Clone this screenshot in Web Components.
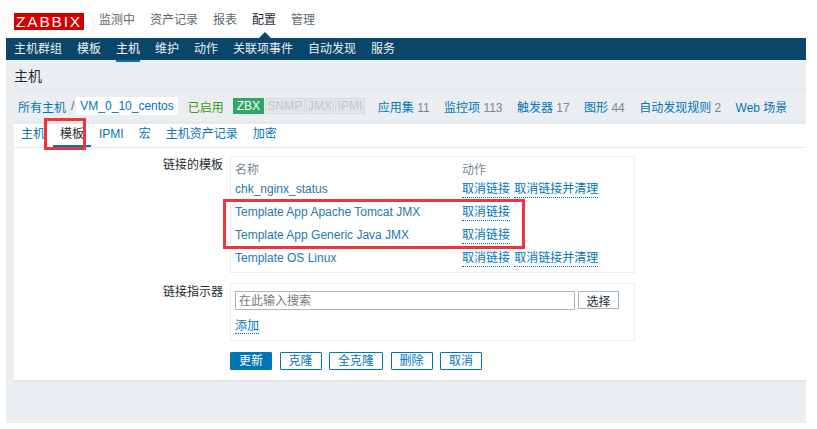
<!DOCTYPE html>
<html>
<head>
<meta charset="utf-8">
<style>
  html, body { margin: 0; padding: 0; background: #fff; }
  body { font: 12px "Liberation Sans", Arial, "Noto Sans CJK SC", sans-serif; color: #1f2c33; }
</style>
</head>
<body>
<zbx-app></zbx-app>
<script>
const FONT = '"Liberation Sans", Arial, "Noto Sans CJK SC", sans-serif';

class ZbxTopNav extends HTMLElement {
  constructor() {
    super();
    this.attachShadow({ mode: 'open' });
    this.shadowRoot.innerHTML = `
      <style>
        :host { display: block; font: 12px ${FONT}; }
        .top { display: flex; align-items: center; height: 38px; padding-left: 14px; position: relative; box-sizing: border-box; }
        .logo { background: #d40000; color: #fff; font-size: 15.5px; line-height: 18px; height: 17px; width: 70px; text-align: center; letter-spacing: 1.8px; margin-right: 15px; margin-top: 5px; overflow: hidden; }
        .top a { color: #5c6a72; margin-right: 15px; margin-top: -1px; }
        .top a.on { color: #1f2c33; }
        .arrow { position: absolute; left: 259px; bottom: 0; width: 0; height: 0; border: 6px solid transparent; border-top: 0; border-bottom-color: #0a466a; }
        .sub { display: flex; height: 22px; background: #0a466a; margin: 0 11px 0 6px; padding-left: 8px; gap: 15px; }
        .sub a { color: #fff; opacity: .92; line-height: 23px; height: 24px; box-sizing: border-box; }
        .sub a.on { border-bottom: 2px solid #0275b8; opacity: 1; }
      </style>
      <div class="top">
        <div class="logo">ZABBIX</div>
        <a>监测中</a><a>资产记录</a><a>报表</a><a class="on">配置</a><a>管理</a>
        <span class="arrow"></span>
      </div>
      <div class="sub">
        <a>主机群组</a><a>模板</a><a class="on">主机</a><a>维护</a><a>动作</a><a>关联项事件</a><a>自动发现</a><a>服务</a>
      </div>`;
  }
}

class ZbxHostHeader extends HTMLElement {
  constructor() {
    super();
    this.attachShadow({ mode: 'open' });
    this.shadowRoot.innerHTML = `
      <style>
        :host { display: block; font: 12px ${FONT}; }
        h1 { margin: 0; font: 14px/33px ${FONT}; height: 29px; color: #1f2c33; border-bottom: 1px solid #dfe4e7; }
        .crumbs { display: flex; align-items: center; height: 32px; border-bottom: 1px solid #dfe4e7; padding-left: 4px; white-space: nowrap; box-sizing: content-box; }
        a { color: #0275b8; }
        .sep { color: #5c6a72; margin: 0 2px 0 5px; }
        .host { background: #fff; padding: 0 4px; height: 18px; line-height: 18px; margin-right: 10px; }
        .ok { color: #3a9c1e; margin-right: 9px; }
        .tags { display: flex; margin-right: 12px; }
        .tag { height: 16px; line-height: 15px; padding: 0 1.4px; margin-right: 1px; box-sizing: border-box; color: #bfc6ca; background: #e2e6e8; border: 1px solid #d5dadd; font-size: 12px; }
        .tag.zbx { background: #2fa866; color: #fff; border-color: #2fa866; padding: 0 3px; }
        .item { margin-right: 14.4px; }
        .n { color: #7a868d; }
      </style>
      <h1>主机</h1>
      <div class="crumbs">
        <a>所有主机</a><span class="sep">/</span><a class="host">VM_0_10_centos</a>
        <span class="ok">已启用</span>
        <span class="tags"><span class="tag zbx">ZBX</span><span class="tag">SNMP</span><span class="tag">JMX</span><span class="tag">IPMI</span></span>
        <span class="item"><a>应用集</a> <span class="n">11</span></span>
        <span class="item"><a>监控项</a> <span class="n">113</span></span>
        <span class="item"><a>触发器</a> <span class="n">17</span></span>
        <span class="item"><a>图形</a> <span class="n">44</span></span>
        <span class="item"><a>自动发现规则</a> <span class="n">2</span></span>
        <span class="item"><a>Web 场景</a></span>
      </div>`;
  }
}

class ZbxTabs extends HTMLElement {
  constructor() {
    super();
    this.attachShadow({ mode: 'open' });
    this.shadowRoot.innerHTML = `
      <style>
        :host { display: flex; height: 23px; border-bottom: 1px solid #e8eaec; padding-left: 7px; font: 12px ${FONT}; }
        a { color: #0275b8; line-height: 21px; height: 23px; padding: 0 0; margin-right: 15px; box-sizing: border-box; }
        a.on { color: #1f2c33; border-bottom: 2px solid #0275b8; padding: 0 7px; margin: 0 8px 0 -7px; }
      </style>
      <a>主机</a><a class="on">模板</a><a>IPMI</a><a>宏</a><a>主机资产记录</a><a>加密</a>`;
  }
}

class ZbxFormRow extends HTMLElement {
  constructor() {
    super();
    this.attachShadow({ mode: 'open' });
    this.shadowRoot.innerHTML = `
      <style>
        :host { display: grid; grid-template-columns: 209px auto; column-gap: 7px; font: 12px ${FONT}; }
        .label { text-align: right; color: #1f2c33; padding-top: 2px; line-height: 14px; }
      </style>
      <div class="label"><slot name="label"></slot></div>
      <div><slot></slot></div>`;
  }
}

class ZbxTemplateList extends HTMLElement {
  constructor() {
    super();
    this.attachShadow({ mode: 'open' });
    const rows = [
      ['chk_nginx_status', true],
      ['Template App Apache Tomcat JMX', false],
      ['Template App Generic Java JMX', false],
      ['Template OS Linux', true]
    ];
    const rowHtml = rows.map(([name, clear]) => `
      <div class="row">
        <a class="name">${name}</a>
        <span><a class="act">取消链接</a>${clear ? ' <a class="act wide">取消链接并清理</a>' : ''}</span>
      </div>`).join('');
    this.shadowRoot.innerHTML = `
      <style>
        :host { display: block; width: 405px; height: 117px; box-sizing: border-box; border: 1px solid #ebeef0; padding: 4px 4px 3px; font: 12px ${FONT}; }
        .row { display: grid; grid-template-columns: 227px auto; height: 23px; line-height: 23px; white-space: nowrap; }
        .row.head { height: 17px; line-height: 18px; color: #7a868d; }
        a { color: #2a76ad; }
        .act { color: #0275b8; border-bottom: 1px dotted #0275b8; padding-bottom: 1px; }
        .wide { margin-left: 1px; }
      </style>
      <div class="row head"><span>名称</span><span>动作</span></div>
      ${rowHtml}`;
  }
}

class ZbxLinkIndicators extends HTMLElement {
  constructor() {
    super();
    this.attachShadow({ mode: 'open' });
    this.shadowRoot.innerHTML = `
      <style>
        :host { display: block; width: 405px; height: 58px; box-sizing: border-box; border: 1px solid #ebeef0; padding: 7px 4px; font: 12px ${FONT}; }
        .line { display: flex; gap: 3px; }
        input { width: 340px; height: 19px; box-sizing: border-box; border: 1px solid #a8b6bd; padding: 0 3px; font: 12px ${FONT}; margin: 0; outline: 0; background: #fff; }
        input::placeholder { color: #7a7a7a; opacity: 1; }
        button { width: 41px; height: 18px; box-sizing: border-box; border: 1px solid #a8b6bd; background: #fff; color: #1f2c33; font: 12px ${FONT}; padding: 0; }
        a { display: inline-block; margin-top: 9px; color: #0275b8; border-bottom: 1px dotted #0275b8; line-height: 14px; }
      </style>
      <div class="line"><input placeholder="在此输入搜索"><button>选择</button></div>
      <a>添加</a>`;
  }
}

class ZbxButton extends HTMLElement {
  constructor() {
    super();
    this.attachShadow({ mode: 'open' });
    this.shadowRoot.innerHTML = `
      <style>
        :host { display: inline-block; height: 18px; box-sizing: border-box; border: 1px solid #0275b8; border-radius: 1px; background: #fff; color: #0275b8; font: 12px/16px ${FONT}; padding: 0 8px; }
        :host([primary]) { background: #0275b8; color: #fff; }
      </style>
      <slot></slot>`;
  }
}

class ZbxApp extends HTMLElement {
  constructor() {
    super();
    this.attachShadow({ mode: 'open' });
    this.shadowRoot.innerHTML = `
      <style>
        :host { display: block; font: 12px ${FONT}; }
        .wrap { background: #ebeef0; margin: 0 11px 6px 6px; height: 363px; padding-left: 8px; box-sizing: border-box; }
        .panel { background: #fff; border-bottom: 2px solid #e0e4e7; margin-top: 1px; height: 258px; box-sizing: border-box; }
        .form { padding-top: 8px; display: flex; flex-direction: column; }
        .gap { height: 10px; }
        .buttons { display: flex; gap: 7.5px; margin: 11px 0 0 216px; }
        .red { position: absolute; border: 3px solid #f0343c; box-sizing: border-box; pointer-events: none; }
        .page { position: relative; height: 429px; overflow: hidden; }
      </style>
      <div class="page">
        <zbx-top-nav></zbx-top-nav>
        <div class="wrap">
          <zbx-host-header></zbx-host-header>
          <div class="panel">
            <zbx-tabs></zbx-tabs>
            <div class="form">
              <zbx-form-row><span slot="label">链接的模板</span><zbx-template-list></zbx-template-list></zbx-form-row>
              <div class="gap"></div>
              <zbx-form-row><span slot="label">链接指示器</span><zbx-link-indicators></zbx-link-indicators></zbx-form-row>
              <div class="buttons">
                <zbx-button primary>更新</zbx-button><zbx-button>克隆</zbx-button><zbx-button>全克隆</zbx-button><zbx-button>删除</zbx-button><zbx-button>取消</zbx-button>
              </div>
            </div>
          </div>
        </div>
        <div class="red" style="left:44px;top:118px;width:42px;height:32px"></div>
        <div class="red" style="left:223px;top:199px;width:302px;height:50px"></div>
      </div>`;
  }
}

customElements.define('zbx-top-nav', ZbxTopNav);
customElements.define('zbx-host-header', ZbxHostHeader);
customElements.define('zbx-tabs', ZbxTabs);
customElements.define('zbx-form-row', ZbxFormRow);
customElements.define('zbx-template-list', ZbxTemplateList);
customElements.define('zbx-link-indicators', ZbxLinkIndicators);
customElements.define('zbx-button', ZbxButton);
customElements.define('zbx-app', ZbxApp);
</script>
</body>
</html>
